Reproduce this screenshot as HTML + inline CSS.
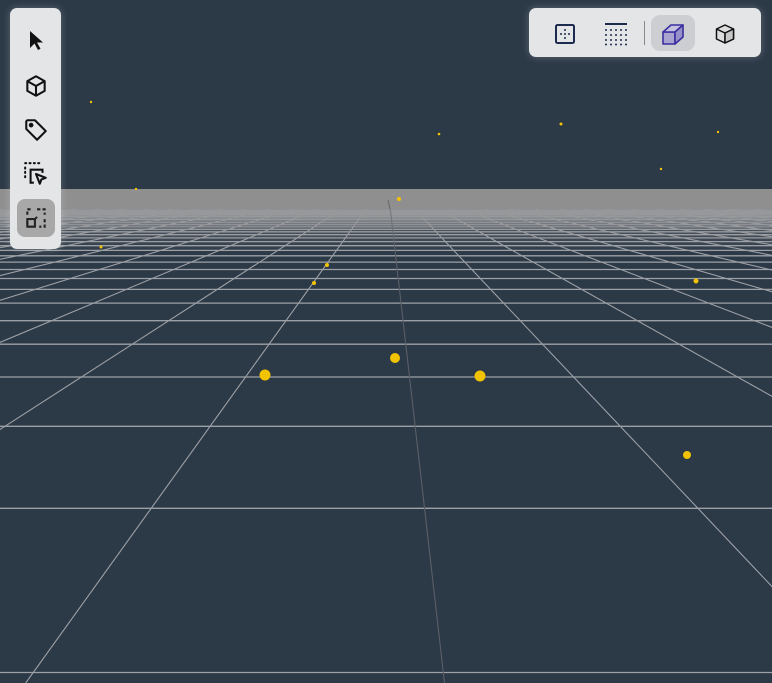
<!DOCTYPE html>
<html><head><meta charset="utf-8"><style>
html,body{margin:0;padding:0;width:772px;height:683px;overflow:hidden;background:#2c3947;font-family:"Liberation Sans",sans-serif}
#scene{position:absolute;left:0;top:0}
.tb{position:absolute;background:#e4e5e7;border-radius:7px;box-shadow:0 0 8px rgba(255,255,255,0.25)}
.ic{position:absolute}
</style></head><body>
<svg id="scene" width="772" height="683" viewBox="0 0 772 683">
<rect x="0" y="0" width="772" height="683" fill="#2c3947"/>
<g id="grid"></g>
<rect x="0" y="189" width="772" height="20" fill="#8f8f8f"/>
<defs><linearGradient id="fog" x1="0" y1="0" x2="0" y2="1">
<stop offset="0" stop-color="#8f8f8f" stop-opacity="0.55"/>
<stop offset="1" stop-color="#8f8f8f" stop-opacity="0"/></linearGradient></defs>
<rect x="0" y="209" width="772" height="45" fill="url(#fog)"/>
<line x1="388" y1="200" x2="390" y2="209" stroke="#666" stroke-width="1"/>
<g fill="#f2c300">
<circle cx="91" cy="102" r="1.2"/><circle cx="439" cy="134" r="1.3"/><circle cx="561" cy="124" r="1.5"/>
<circle cx="718" cy="132" r="1.2"/><circle cx="661" cy="169" r="1.2"/><circle cx="136" cy="189" r="1.2"/>
<circle cx="399" cy="199" r="2"/><circle cx="101" cy="247" r="1.5"/><circle cx="327" cy="265" r="2"/>
<circle cx="314" cy="283" r="2"/><circle cx="696" cy="281" r="2.5"/><circle cx="395" cy="358" r="5"/>
<circle cx="265" cy="375" r="5.5"/><circle cx="480" cy="376" r="5.5"/><circle cx="687" cy="455" r="4"/>
</g>
</svg>
<script>
(function(){
var g=document.getElementById('grid'),s='';
var vx=387,vy=180,K=985;
for(var n=0;n<200;n++){var y=vy+K/(n+2);if(y<209)break;
 s+='<line x1="0" y1="'+y.toFixed(1)+'" x2="772" y2="'+y.toFixed(1)+'" stroke="#9da1a6" stroke-width="1.3"/>';}
for(var k=-40;k<=40;k++){var xb=443+408*k;
 var x1=vx+(xb-vx)*(209-vy)/490,x2=vx+(xb-vx)*(683-vy)/490;
 s+='<line x1="'+x1.toFixed(1)+'" y1="209" x2="'+x2.toFixed(1)+'" y2="683" stroke="'+(k==0?'#5a5f66':'#9da1a6')+'" stroke-width="1.1"/>';}
g.innerHTML=s;})();
</script>

<div class="tb" style="left:10px;top:8px;width:51px;height:241px">
 <div style="position:absolute;left:7px;top:191px;width:38px;height:38px;border-radius:8px;background:#a8a8a8"></div>
 <svg class="ic" style="left:14px;top:20px" width="24" height="24" viewBox="0 0 24 24"><path d="M6 3 L6 20 L10.5 15.5 L14 22 L16.5 20.8 L13 14.5 L19 14.5 Z" fill="#111"/></svg>
 <svg class="ic" style="left:13px;top:65px" width="26" height="26" viewBox="0 0 24 24" fill="none" stroke="#111" stroke-width="1.9" stroke-linejoin="round"><path d="M12 3 L20 7.5 L20 16.5 L12 21 L4 16.5 L4 7.5 Z M4 7.5 L12 12 L20 7.5 M12 12 L12 21"/></svg>
 <svg class="ic" style="left:13px;top:109px" width="26" height="26" viewBox="0 0 24 24" fill="none" stroke="#111" stroke-width="1.9" stroke-linejoin="round"><path d="M3 4 L3 11 L13 21 L21 13 L11 3 L4 3 Z"/><circle cx="7.5" cy="7.5" r="1.2" fill="#111"/></svg>
 <svg class="ic" style="left:13px;top:153px" width="26" height="26" viewBox="0 0 24 24" fill="none" stroke="#111" stroke-width="1.9"><path d="M2 2h1M6 2h1M10 2h1M14 2h1M2 6v1M2 10v1M2 14v1" stroke-linecap="round"/><path d="M10 20 L7 20 L7 8 L18 8 L18 11"/><path d="M12 12 L21 15.5 L17 17 L15.5 21 Z" stroke-linejoin="round"/></svg>
 <svg class="ic" style="left:13px;top:197px" width="26" height="26" viewBox="0 0 24 24" fill="none" stroke="#222" stroke-width="1.9"><path d="M4 9V4h5M13 4h7v5M20 13v7h-5M4 15v5" stroke-dasharray="3 2"/><path d="M4 13 L11 13 L11 20 L4 20 Z M11 13 L13 11"/></svg>
</div>

<div class="tb" style="left:529px;top:8px;width:232px;height:49px">
 <div style="position:absolute;left:122px;top:7px;width:44px;height:36px;border-radius:9px;background:#cdced2"></div>
 <div style="position:absolute;left:115px;top:13px;width:1px;height:24px;background:#888"></div>
 <svg class="ic" style="left:25px;top:15px" width="22" height="22" viewBox="0 0 22 22" fill="none"><rect x="2" y="2" width="18" height="18" rx="1.5" stroke="#1d2b4e" stroke-width="2"/><g fill="#1d2b4e"><circle cx="11" cy="7" r="1"/><circle cx="7" cy="11" r="1"/><circle cx="11" cy="11" r="1"/><circle cx="15" cy="11" r="1"/><circle cx="11" cy="15" r="1"/></g></svg>
 <svg class="ic" style="left:75px;top:14px" width="24" height="24" viewBox="0 0 24 24"><rect x="1" y="1" width="22" height="2" fill="#1d2b4e"/><g fill="#1d2b4e"><circle cx="2" cy="8" r="1"/><circle cx="7" cy="8" r="1"/><circle cx="12" cy="8" r="1"/><circle cx="17" cy="8" r="1"/><circle cx="22" cy="8" r="1"/><circle cx="2" cy="13" r="1"/><circle cx="7" cy="13" r="1"/><circle cx="12" cy="13" r="1"/><circle cx="17" cy="13" r="1"/><circle cx="22" cy="13" r="1"/><circle cx="2" cy="18" r="1"/><circle cx="7" cy="18" r="1"/><circle cx="12" cy="18" r="1"/><circle cx="17" cy="18" r="1"/><circle cx="22" cy="18" r="1"/><circle cx="2" cy="22.5" r="1"/><circle cx="7" cy="22.5" r="1"/><circle cx="12" cy="22.5" r="1"/><circle cx="17" cy="22.5" r="1"/><circle cx="22" cy="22.5" r="1"/></g></svg>
 <svg class="ic" style="left:132px;top:14px" width="24" height="24" viewBox="0 0 24 24" stroke="#3a2ea0" stroke-width="1.6" stroke-linejoin="round"><path d="M2 10 L14 10 L14 22 L2 22 Z" fill="#a9a3cf"/><path d="M2 10 L10 3 L22 3 L14 10 Z" fill="#c5c0e0"/><path d="M14 10 L22 3 L22 15 L14 22 Z" fill="#9890c8"/></svg>
 <svg class="ic" style="left:185px;top:15px" width="22" height="22" viewBox="0 0 22 22" stroke="#111" stroke-width="1.5" stroke-linejoin="round"><path d="M11 2 L19.5 6 L19.5 16 L11 20 L2.5 16 L2.5 6 Z" fill="#ddd"/><path d="M2.5 6 L11 10 L19.5 6 M11 10 L11 20" fill="none"/><path d="M11 10 L19.5 6 L19.5 16 L11 20 Z" fill="#c8c8c8"/></svg>
</div>
</body></html>
